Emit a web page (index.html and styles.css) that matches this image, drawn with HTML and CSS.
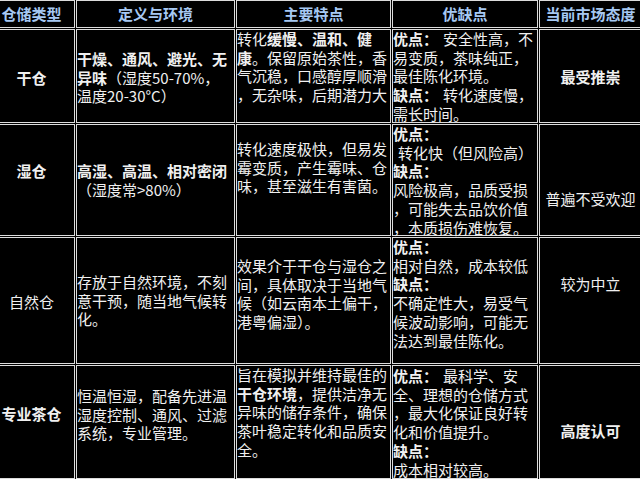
FILE: index.html
```html
<!DOCTYPE html>
<html lang="zh-CN">
<head>
<meta charset="utf-8">
<title>茶叶仓储类型对比</title>
<link rel="stylesheet" href="styles.css">
</head>
<body>
<div class="grid">
  <div class="row hdr">
    <div class="cell head">仓储类型</div>
    <div class="cell head">定义与环境</div>
    <div class="cell head">主要特点</div>
    <div class="cell head">优缺点</div>
    <div class="cell head">当前市场态度</div>
  </div>
  <div class="row r1">
    <div class="cell name"><b>干仓</b></div>
    <div class="cell def"><b>干燥、通风、避光、无<br>异味</b>（湿度50-70%，<br>温度20-30°C）</div>
    <div class="cell feat">转化<b>缓慢、温和、健<br>康</b>。保留原始茶性，香<br>气沉稳，口感醇厚顺滑<br>，无杂味，后期潜力大</div>
    <div class="cell pros"><b>优点：</b><span class="sp"></span>安全性高，不<br>易变质，茶味纯正，<br>最佳陈化环境。<br><b>缺点：</b><span class="sp"></span>转化速度慢，<br>需长时间。</div>
    <div class="cell att"><b>最受推崇</b></div>
  </div>
  <div class="row r2">
    <div class="cell name"><b>湿仓</b></div>
    <div class="cell def"><b>高湿、高温、相对密闭</b><br>（湿度常&gt;80%）</div>
    <div class="cell feat">转化速度极快，但易发<br>霉变质，产生霉味、仓<br>味，甚至滋生有害菌。</div>
    <div class="cell pros"><b>优点：</b><br><span class="sp"></span>转化快（但风险高）<br><b>缺点：</b><br>风险极高，品质受损<br>，可能失去品饮价值<br>，本质损伤难恢复。</div>
    <div class="cell att">普遍不受欢迎</div>
  </div>
  <div class="row r3">
    <div class="cell name">自然仓</div>
    <div class="cell def">存放于自然环境，不刻<br>意干预，随当地气候转<br>化。</div>
    <div class="cell feat">效果介于干仓与湿仓之<br>间，具体取决于当地气<br>候（如云南本土偏干，<br>港粤偏湿）。</div>
    <div class="cell pros"><b>优点：</b><br>相对自然，成本较低<br><b>缺点：</b><br>不确定性大，易受气<br>候波动影响，可能无<br>法达到最佳陈化。</div>
    <div class="cell att">较为中立</div>
  </div>
  <div class="row r4">
    <div class="cell name"><b>专业茶仓</b></div>
    <div class="cell def">恒温恒湿，配备先进温<br>湿度控制、通风、过滤<br>系统，专业管理。</div>
    <div class="cell feat">旨在模拟并维持最佳的<br><b>干仓环境</b>，提供洁净无<br>异味的储存条件，确保<br>茶叶稳定转化和品质安<br>全。</div>
    <div class="cell pros"><b>优点：</b><span class="sp"></span>最科学、安<br>全、理想的仓储方式<br>，最大化保证良好转<br>化和价值提升。<br><b>缺点：</b><br>成本相对较高。</div>
    <div class="cell att"><b>高度认可</b></div>
  </div>
</div>
</body>
</html>
```

FILE: styles.css
```css
html, body {
  margin: 0;
  padding: 0;
  background: #000;
  overflow: hidden;
}

body {
  font-family: "Noto Sans CJK SC", "Noto Sans", sans-serif;
  font-size: 15px;
  line-height: 18.7px;
  color: #f0f0f0;
}

.grid {
  display: grid;
  grid-template-columns: 87px 159px 155px 146px 103px;
  grid-template-rows: 28px 94px 112px 127px 114px;
  gap: 1px;
  width: 654px;
  margin-left: -12px;
}

.row {
  display: contents;
}

.cell {
  box-sizing: border-box;
  border: 1px solid #dcdcdc;
  white-space: nowrap;
  overflow: visible;
}

.head {
  color: #a6c8f2;
  font-weight: 700;
  display: flex;
  align-items: center;
  justify-content: center;
}

b {
  font-weight: 700;
}

.name,
.att {
  text-align: center;
}

.sp {
  display: inline-block;
  width: 5px;
}

.r1 > .name { padding-top: 39px; }
.r1 > .def { padding-top: 20px; }
.r1 > .feat { padding-top: 0; }
.r1 > .pros { padding-top: 0; }
.r1 > .att { padding-top: 38px; }

.r2 > .name { padding-top: 37px; }
.r2 > .def { padding-top: 37px; }
.r2 > .feat { padding-top: 15px; }
.r2 > .pros { padding-top: 0; }
.r2 > .att { padding-top: 65px; }

.r3 > .name { padding-top: 55px; }
.r3 > .def { padding-top: 35px; }
.r3 > .feat { padding-top: 19px; }
.r3 > .pros { padding-top: 0; }
.r3 > .att { padding-top: 37px; }

.r4 > .name { padding-top: 39px; }
.r4 > .def { padding-top: 21px; }
.r4 > .feat { padding-top: 0; }
.r4 > .pros { padding-top: 1px; }
.r4 > .att { padding-top: 56px; }
```
